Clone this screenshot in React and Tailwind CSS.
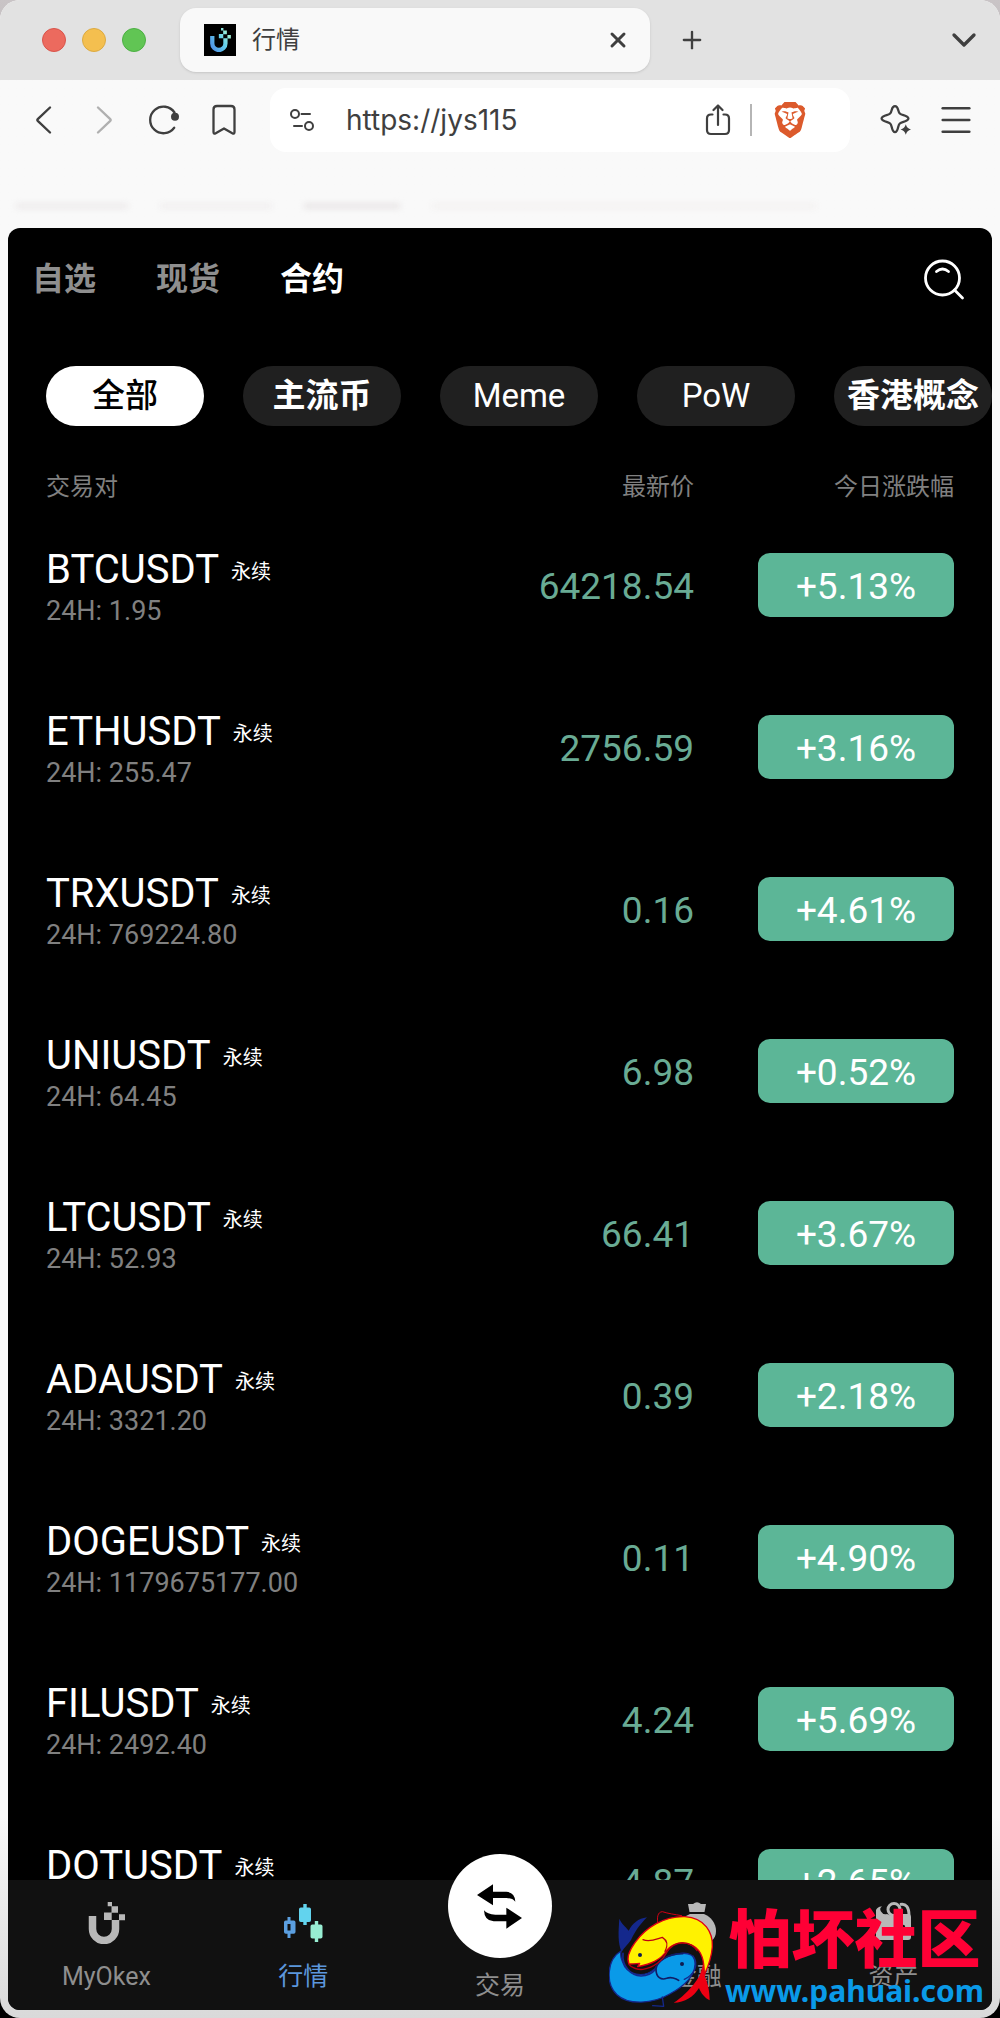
import { useState } from 'react';
import { ChevronDown, Plus, X, Menu } from 'lucide-react';
import { SiBrave } from 'react-icons/si';

const PAIRS = [
  { name: 'BTCUSDT', volume: '1.95', price: '64218.54', change: '+5.13%' },
  { name: 'ETHUSDT', volume: '255.47', price: '2756.59', change: '+3.16%' },
  { name: 'TRXUSDT', volume: '769224.80', price: '0.16', change: '+4.61%' },
  { name: 'UNIUSDT', volume: '64.45', price: '6.98', change: '+0.52%' },
  { name: 'LTCUSDT', volume: '52.93', price: '66.41', change: '+3.67%' },
  { name: 'ADAUSDT', volume: '3321.20', price: '0.39', change: '+2.18%' },
  { name: 'DOGEUSDT', volume: '1179675177.00', price: '0.11', change: '+4.90%' },
  { name: 'FILUSDT', volume: '2492.40', price: '4.24', change: '+5.69%' },
  { name: 'DOTUSDT', volume: '1048.60', price: '4.87', change: '+2.65%' },
];

const MARKETS = ['自选', '现货', '合约'];
const CATEGORIES = [
  { label: '全部', text: 'text-[33px] font-medium' },
  { label: '主流币', text: 'text-[33px] font-bold' },
  { label: 'Meme', text: 'text-[33px] font-normal' },
  { label: 'PoW', text: 'text-[33px] font-normal' },
  { label: '香港概念', text: 'text-[33px] font-bold' },
];

/* ---------- icons ---------- */

function LogoMark({ className, gradient }) {
  const paint = gradient ? 'url(#logo-fill)' : 'currentColor';
  return (
    <svg className={className} viewBox="0 0 42 42" fill="none" aria-hidden="true">
      <defs>
        <linearGradient id="logo-fill" gradientUnits="userSpaceOnUse" x1="4" y1="34" x2="40" y2="12">
          <stop offset="0" stopColor="#4f8fe6" />
          <stop offset="0.55" stopColor="#62cdea" />
          <stop offset="1" stopColor="#a9f5d4" />
        </linearGradient>
      </defs>
      <path d="M7.5 14V27a11.5 11.5 0 0 0 23 0V18" stroke={paint} strokeWidth="7.5" />
      <path d="M22.700 0h4.300v4.300h-4.300zM26.500 4.300h6.500v6.500h-6.500zM19 10.500h7.700v7.500H19zM34 12.300h6v6h-6z" fill={paint} />
    </svg>
  );
}

function BackIcon({ className }) {
  return (
    <svg className={className} viewBox="0 0 32 32" fill="none" stroke="currentColor" strokeWidth="2.4" strokeLinecap="round" strokeLinejoin="round" aria-hidden="true">
      <path d="M22 3.500 10 14.800q-1.200 1.200 0 2.400L22 28.500" />
    </svg>
  );
}

function ReloadIcon() {
  return (
    <svg className="h-8 w-8" viewBox="0 0 32 32" fill="none" aria-hidden="true">
      <path d="M26.200 23.800A13.300 13.300 0 1 1 26.500 8.500" stroke="currentColor" strokeWidth="2.300" strokeLinecap="round" />
      <circle cx="27" cy="12.700" r="4" fill="currentColor" />
    </svg>
  );
}

function BookmarkIcon() {
  return (
    <svg className="h-8 w-8" viewBox="0 0 32 32" fill="none" stroke="currentColor" strokeWidth="2.300" strokeLinejoin="round" aria-hidden="true">
      <path d="M9 2h14q3.500 0 3.500 3.500V28q0 2.500-2.200 1.300L16 24.500l-8.300 4.800Q5.500 30.500 5.500 28V5.500Q5.500 2 9 2z" />
    </svg>
  );
}

function TuneIcon() {
  return (
    <svg className="h-6 w-6" viewBox="0 0 24 24" fill="none" stroke="currentColor" strokeWidth="2" strokeLinecap="round" aria-hidden="true">
      <circle cx="5" cy="6" r="4" />
      <path d="M11.500 6H20M4 18h8" />
      <circle cx="19" cy="18" r="4" />
    </svg>
  );
}

function ShareIcon() {
  return (
    <svg className="h-8 w-8" viewBox="0 0 32 32" fill="none" stroke="currentColor" strokeWidth="2.200" strokeLinecap="round" strokeLinejoin="round" aria-hidden="true">
      <path d="M10.500 10.500H9q-4 0-4 4V26q0 4 4 4h14q4 0 4-4V14.500q0-4-4-4h-1.500" />
      <path d="M16 21V1.500M11.500 6 16 1.500 20.500 6" />
    </svg>
  );
}

function SparkleIcon() {
  return (
    <svg className="h-8 w-8" viewBox="0 0 32 32" fill="none" aria-hidden="true">
      <path d="M15 2.200c2 0 2.600 1.400 3.200 3.800.9 3.500 1.600 4.200 5.200 5.200 3.200.9 5 1.600 5 3.400s-2 2.500-5 3.300c-3.600 1-4.300 1.600-5.200 5.100-.7 3-1.300 5.200-3.200 5.200s-2.600-2.200-3.300-5.200c-.9-3.500-1.600-4.100-5.100-5.100-3-.8-5-1.500-5-3.300s1.900-2.500 5-3.400c3.500-1 4.200-1.700 5.100-5.200C12.300 3.600 13 2.200 15 2.200z" stroke="currentColor" strokeWidth="2.300" />
      <path d="M25.800 20.200q1.200 4.300 5.200 5.300-4 1-5.200 5.300-1.200-4.300-5.200-5.300 4-1 5.200-5.300z" fill="currentColor" />
    </svg>
  );
}

function SearchIcon() {
  return (
    <svg className="h-11 w-11" viewBox="0 0 44 44" fill="none" stroke="currentColor" strokeWidth="2.800" strokeLinecap="round" aria-hidden="true">
      <circle cx="20.500" cy="21" r="17" />
      <path d="M14.500 14.500q6-5 12 0M32.500 33l8 8" />
    </svg>
  );
}

function CandlesIcon() {
  return (
    <svg className="h-[42px] w-[42px]" viewBox="0 0 42 42" aria-hidden="true">
      <path d="M5.500 15h3v3.500h3.200q1.800 0 1.800 1.800V30q0 1.800-1.800 1.800H8.500V36h-3v-4.200H3.800Q2 31.800 2 30v-9.700q0-1.800 1.800-1.800h1.700zM5.500 22v6.500h3V22z" fill="#5b9fe0" fillRule="evenodd" />
      <path d="M21.300 2h3.400v3.500h2.500q1.800 0 1.800 1.800v11q0 1.800-1.800 1.800h-2.500V23h-3.400v-2.900h-2.500q-1.800 0-1.800-1.800v-11q0-1.800 1.800-1.800h2.500z" fill="#62d3ee" />
      <path d="M32.800 19h3.400v3.500h2.500q1.800 0 1.800 1.800v10.500q0 1.800-1.800 1.800h-2.500V40h-3.400v-3.400h-2.500q-1.800 0-1.800-1.800V24.300q0-1.800 1.800-1.800h2.500z" fill="#98eed3" />
    </svg>
  );
}

function SwapIcon() {
  return (
    <svg className="h-[45px] w-[45px]" viewBox="0 0 135 133" fill="currentColor" aria-hidden="true">
      <path d="M0 32 48 0v22h40q26 2 27 30-9-11-27-11H48v22z" />
      <path d="M135 101 88 70v21H55Q30 90 21 78q1 32 29 33h38v22z" />
    </svg>
  );
}

function MoneyBagIcon() {
  return (
    <svg className="h-[42px] w-[42px]" viewBox="0 0 42 42" fill="currentColor" aria-hidden="true">
      <path d="M12 2h5q4-3.500 8 0h5l-1.500 8h-15z" />
      <path d="M14 12h14c7 3 12 9 12 17 0 9-6 13-19 13S2 38 2 29c0-8 5-14 12-17z" />
    </svg>
  );
}

function WalletIcon() {
  return (
    <svg className="h-[42px] w-[42px]" viewBox="0 0 42 42" fill="none" aria-hidden="true">
      <circle cx="21" cy="7.500" r="6" stroke="currentColor" strokeWidth="3" />
      <path d="M27 2.500c6-1.500 9 3 9 11" stroke="currentColor" strokeWidth="3" />
      <path d="M3 8q2-4 6-3.500Q6 6 8 9.500t6 2.500q7 4 14 0h7q3 0 3 3v20q0 3-3 3H6q-3 0-3-3z" fill="currentColor" />
      <circle cx="30" cy="25" r="2.200" fill="#111" />
    </svg>
  );
}

function KoiLogo() {
  return (
    <svg className="h-[100px] w-[108px]" viewBox="24 39 324 300" fill="none" strokeLinejoin="round" strokeLinecap="round" aria-hidden="true">
      <path d="M62 168C50 140 52 110 55 68c8 18 18 22 28 36 12-22 28-36 55-40-24 24-38 46-48 68-10 14-20 22-28 36z" fill="#14288c" />
      <path d="M60 165C18 190 12 262 48 296c34 32 108 28 158-2 44-24 74-54 76-88 2-30-20-36-42-34-38 4-66 22-78 46-34 30-84 22-98-22-6-14-6-22-4-31z" fill="#0a9ae8" stroke="#14288c" strokeWidth="4" />
      <path d="M66 172c-4 36 22 66 54 68 22 0 34-8 44-20" stroke="#14288c" strokeWidth="5" />
      <path d="M245 173c-44 0-78 22-80 46 0 26 16 34 32 28 12-5 28 0 36 6" stroke="#101c66" strokeWidth="5" />
      <path d="M276 180c20 28 2 56-26 70M155 329l33 2-4-28" stroke="#14288c" strokeWidth="4" />
      <circle cx="243" cy="204" r="6" fill="#101c50" />
      <path d="M304 170c6 36-2 62-18 84-22 30-46 52-68 66 34 0 60-18 76-44 6 16 18 30 32 37 0-30-6-52-14-70 4-26 4-50-8-73z" fill="#ee0012" />
      <path d="M172 90c-6-26-2-42 12-43 18 6 36 8 58 12" stroke="#d40014" strokeWidth="3" />
      <path d="M84 204c-8-18 2-42 18-64 32-46 88-80 150-78 60 4 84 48 82 90-2 30-12 58-24 84 0-40-6-72-36-88-28-14-56-8-76 14-18 30-48 42-88 50l6-10q-20 2-32 2z" fill="#fff200" stroke="#e00014" strokeWidth="4" />
      <path d="M84 206c8 10 28 16 42 14 34-6 60-28 72-52 22-34 68-38 90-4" stroke="#b8000e" strokeWidth="4" />
      <path d="M126 131c22 10 44-4 58-7 16 10 18 22 8 42" stroke="#c00010" strokeWidth="4" />
      <circle cx="117" cy="177" r="6" fill="#101c50" />
    </svg>
  );
}

/* ---------- browser frame ---------- */

function TabStrip() {
  return (
    <div className="flex h-20 items-center bg-[#e2e2e2] pr-4 pl-[42px]">
      <div className="flex gap-4">
        <span className="h-6 w-6 rounded-full border border-[#d9544b] bg-[#ec6a5e]" />
        <span className="h-6 w-6 rounded-full border border-[#dcaa41] bg-[#f4bf4f]" />
        <span className="h-6 w-6 rounded-full border border-[#4cb043] bg-[#61c554]" />
      </div>
      <div className="ml-[34px] flex h-16 w-[470px] items-center rounded-2xl bg-[#f9f9f9] px-6 shadow-sm">
        <span className="flex h-8 w-8 items-center justify-center bg-black">
          <LogoMark className="h-6 w-6" gradient />
        </span>
        <span className="ml-4 flex-1 text-2xl">行情</span>
        <button type="button" aria-label="关闭标签页" className="-mr-1">
          <X className="h-6 w-6" strokeWidth={3} />
        </button>
      </div>
      <button type="button" aria-label="新标签页" className="ml-7">
        <Plus className="h-7 w-7" strokeWidth={2} />
      </button>
      <button type="button" aria-label="标签页列表" className="ml-auto">
        <ChevronDown className="h-10 w-10" strokeWidth={2} />
      </button>
    </div>
  );
}

function Toolbar() {
  return (
    <div className="flex h-20 items-center gap-5 px-6">
      <button type="button" aria-label="后退" className="flex w-10 justify-center">
        <BackIcon className="h-8 w-8" />
      </button>
      <button type="button" aria-label="前进" className="flex w-10 justify-center text-[#b0b0b0]">
        <BackIcon className="h-8 w-8 rotate-180" />
      </button>
      <button type="button" aria-label="刷新" className="flex w-10 justify-center">
        <ReloadIcon />
      </button>
      <button type="button" aria-label="收藏" className="flex w-10 justify-center">
        <BookmarkIcon />
      </button>
      <div className="mx-[6px] flex h-16 min-w-0 flex-1 items-center rounded-2xl bg-white pr-[42px] pl-5">
        <TuneIcon />
        <input
          type="text"
          aria-label="地址"
          defaultValue="https://jys115"
          className="ml-8 min-w-0 flex-1 bg-transparent font-['Inter','Noto_Sans_CJK_SC',sans-serif] text-[28px] outline-none"
        />
        <button type="button" aria-label="分享">
          <ShareIcon />
        </button>
        <span className="mx-4 h-8 w-[2px] bg-[#b5b5b5]" />
        <button type="button" aria-label="Brave Shields" className="ml-1">
          <SiBrave className="h-9 w-9 text-[#dc5a2c]" />
        </button>
      </div>
      <button type="button" aria-label="AI" className="flex w-10 justify-center">
        <SparkleIcon />
      </button>
      <button type="button" aria-label="菜单" className="flex w-10 justify-center">
        <Menu className="h-10 w-10" strokeWidth={1.5} />
      </button>
    </div>
  );
}

function BookmarksBar() {
  return (
    <div className="flex h-[68px] items-end gap-8 overflow-hidden px-4 pb-5">
      <span className="h-1 w-28 bg-[#e9e5e6] blur-[3px]" />
      <span className="h-1 w-28 bg-[#eeebec] blur-[3px]" />
      <span className="h-1 w-24 bg-[#e2dedf] blur-[3px]" />
      <span className="h-1 w-96 bg-[#f2efee] blur-[3px]" />
    </div>
  );
}

/* ---------- exchange app ---------- */

function MarketHeader() {
  const [market, setMarket] = useState('合约');
  return (
    <header className="flex h-[102px] shrink-0 items-center justify-between pr-[26px] pl-6">
      <div className="flex gap-[60px]">
        {MARKETS.map((m) => (
          <button
            key={m}
            type="button"
            onClick={() => setMarket(m)}
            className={`text-[32px] leading-10 font-bold ${m === market ? 'text-white' : 'text-[#8f8f8f]'}`}
          >
            {m}
          </button>
        ))}
      </div>
      <button type="button" aria-label="搜索" className="text-white">
        <SearchIcon />
      </button>
    </header>
  );
}

function CategoryPills() {
  const [category, setCategory] = useState('全部');
  return (
    <div className="mt-9 flex shrink-0 gap-[39px] overflow-hidden pl-[38px]">
      {CATEGORIES.map(({ label, text }) => (
        <button
          key={label}
          type="button"
          onClick={() => setCategory(label)}
          className={`flex h-[60px] w-[158px] shrink-0 items-center justify-center rounded-full whitespace-nowrap ${text}
            ${label === category ? 'bg-white text-black' : 'bg-[#202020] text-white'}`}
        >
          {label}
        </button>
      ))}
    </div>
  );
}

function PairRow({ pair }) {
  return (
    <tr className="h-[162px]">
      <td className="pt-2">
        <div className="flex items-center gap-3">
          <span className="text-[40px] leading-[44px] text-white">{pair.name}</span>
          <span className="mt-1 text-xl leading-6 text-white">永续</span>
        </div>
        <div className="text-[27px] leading-[38px] text-[#808080]">24H: {pair.volume}</div>
      </td>
      <td className="pt-1 text-right text-[37px] text-[#69ab94]">{pair.price}</td>
      <td>
        <span className="ml-auto flex h-16 w-[196px] items-center justify-center rounded-xl bg-[#5cb697] pt-1 text-[37px] text-white">
          {pair.change}
        </span>
      </td>
    </tr>
  );
}

function PairTable() {
  return (
    <div className="mt-11 min-h-0 flex-1 overflow-hidden px-[38px]">
      <table className="w-full table-fixed">
        <thead>
          <tr className="h-[34px] text-2xl leading-[34px] text-[#808080]">
            <th className="text-left font-normal">交易对</th>
            <th className="w-[260px] text-right font-normal">最新价</th>
            <th className="w-[260px] text-right font-normal">今日涨跌幅</th>
          </tr>
        </thead>
        <tbody>
          {PAIRS.map((pair) => (
            <PairRow key={pair.name} pair={pair} />
          ))}
        </tbody>
      </table>
    </div>
  );
}

function NavItem({ label, icon, active }) {
  return (
    <a href="#" className={`flex flex-1 flex-col items-center pt-[22px] ${active ? 'text-[#5c97dc]' : 'text-[#b8b8b8]'}`}>
      {icon}
      <span className={`mt-[18px] text-[25px] leading-[30px] ${active ? '' : 'text-[#8e8e8e]'}`}>{label}</span>
    </a>
  );
}

function BottomNav() {
  return (
    <nav className="relative flex h-[130px] shrink-0 bg-[#111]">
      <NavItem label="MyOkex" icon={<LogoMark className="h-[42px] w-[42px]" />} />
      <NavItem label="行情" icon={<CandlesIcon />} active />
      <a href="#" className="-mt-[26px] flex flex-1 flex-col items-center text-[#8e8e8e]">
        <span className="flex h-[104px] w-[104px] items-center justify-center rounded-full bg-white text-black">
          <SwapIcon />
        </span>
        <span className="mt-[13px] text-[25px] leading-[30px]">交易</span>
      </a>
      <NavItem label="金融" icon={<MoneyBagIcon />} />
      <NavItem label="资产" icon={<WalletIcon />} />
    </nav>
  );
}

// community stamp laid over the bottom right corner
function Watermark() {
  return (
    <div className="pointer-events-none absolute right-4 bottom-[9px] flex items-center gap-2">
      <KoiLogo />
      <div className="flex flex-col items-center">
        <span className="text-[63px] leading-[64px] font-black text-[#ff0035]">怕坏社区</span>
        <span className="font-['Noto_Sans',sans-serif] text-[30px] leading-9 font-bold text-[#0a9ae8]">www.pahuai.com</span>
      </div>
    </div>
  );
}

export default function App() {
  return (
    <div className="h-screen bg-linear-to-b from-[#c9c4c6] to-black font-['Roboto','Noto_Sans_CJK_SC',sans-serif]" lang="zh-CN">
      <div className="relative flex h-full flex-col overflow-hidden rounded-[20px] bg-linear-to-b from-[#f9f9f9] from-90% to-[#d9d9d9] text-[#3f3f3f]">
        <TabStrip />
        <Toolbar />
        <BookmarksBar />
        <main className="mx-2 mb-2 flex min-h-0 flex-1 flex-col overflow-hidden rounded-xl bg-black">
          <MarketHeader />
          <CategoryPills />
          <PairTable />
          <BottomNav />
        </main>
        <Watermark />
      </div>
    </div>
  );
}
